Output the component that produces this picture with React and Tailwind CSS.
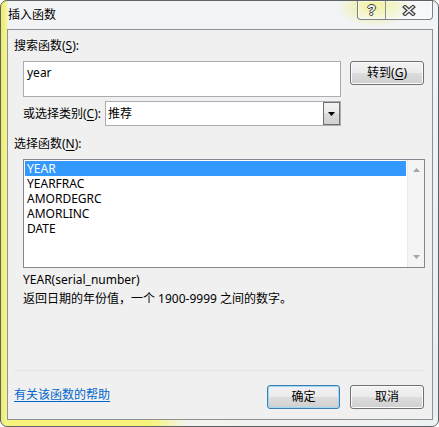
import React from 'react';

const FUNCS = ['YEAR', 'YEARFRAC', 'AMORDEGRC', 'AMORLINC', 'DATE'];

const btnFace =
  'bg-[linear-gradient(180deg,#f2f2f2_0%,#ebebeb_50%,#dddddd_50%,#cfcfcf_100%)]';

function WinButton({ children, primary, width }) {
  return (
    <button
      type="button"
      className={`h-[24px] shrink-0 rounded-[3px] border text-[12px] leading-4 text-black ${btnFace} ${width} ${
        primary
          ? 'border-[#3c7fb1] shadow-[inset_0_0_0_1px_#9cd9f6]'
          : 'border-[#707070] shadow-[inset_0_0_0_1px_#fbfbfb]'
      }`}
    >
      {children}
    </button>
  );
}

function Arrow({ up, color = '#000', w = 7, h = 4 }) {
  return (
    <svg width={w} height={h} viewBox={`0 0 ${w} ${h}`}>
      {up ? (
        <polygon points={`0,${h} ${w},${h} ${w / 2},0`} fill={color} />
      ) : (
        <polygon points={`0,0 ${w},0 ${w / 2},${h}`} fill={color} />
      )}
    </svg>
  );
}

function TitleControls() {
  return (
    <div className="flex h-[19px] rounded-b-[4px] border-x border-b border-[#7d8288] bg-[linear-gradient(180deg,rgba(255,255,255,0.15),rgba(255,255,255,0.45))] shadow-[inset_0_0_0_1px_rgba(255,255,255,0.5)]">
      <div className="flex w-[28px] items-center justify-center border-r border-[#8a8f95]">
        <span className="font-['Liberation_Sans',sans-serif] text-[14px] font-bold leading-4 text-[#f2f2f2] [text-shadow:1px_0_#3d3d3d,-1px_0_#3d3d3d,0_1px_#3d3d3d,0_-1px_#3d3d3d]">
          ?
        </span>
      </div>
      <div className="flex w-[46px] items-center justify-center">
        <svg width="14" height="11" viewBox="0 0 14 11">
          <path d="M3 2 L11 9 M11 2 L3 9" stroke="#3d3d3d" strokeWidth="4" strokeLinecap="square" />
          <path d="M3 2 L11 9 M11 2 L3 9" stroke="#eeeeee" strokeWidth="1.6" strokeLinecap="square" />
        </svg>
      </div>
    </div>
  );
}

export default function App() {
  return (
    <div className="w-[439px] h-[427px] overflow-hidden">
      <div className="flex h-[427px] w-[439px] flex-col rounded-[7px] border border-[#5d6266] font-['Noto_Sans','Noto_Sans_CJK_SC',sans-serif] text-[12px] text-black [background:radial-gradient(38px_20px_at_374px_6px,rgba(236,236,80,0.7),transparent),linear-gradient(90deg,#ecec6a_0,#f4f49c_6px,transparent_7px),linear-gradient(90deg,#f7f37a_0,#f7f37a_150px,#f3f3ee_185px,#eef1f3_100%)_bottom/100%_10px_no-repeat,linear-gradient(180deg,#f2f4f6,#e8edf0)]">
        {/* title bar */}
        <div className="flex h-[28px] items-start justify-between pl-[7px] pr-[5px]">
          <span className="mt-[6px] leading-4">插入函数</span>
          <TitleControls />
        </div>

        {/* client area */}
        <div className="ml-[6px] flex h-[391px] w-[426px] flex-col border border-[#8e9092] bg-[#f0f0f0]">
          <div className="ml-[6px] mt-[8px] h-4 leading-4">
            搜索函数(<span className="underline underline-offset-2">S</span>):
          </div>

          <div className="ml-[15px] mt-[7px] flex items-start gap-[9px]">
            <div className="h-[36px] w-[318px] border border-[#abadb3] bg-white pl-[3px] pt-[3px] leading-4">
              year
            </div>
            <WinButton width="w-[74px]">
              转到(<span className="underline underline-offset-2">G</span>)
            </WinButton>
          </div>

          <div className="ml-[15px] mt-[4px] flex h-[25px] items-center">
            <span className="w-[82px] leading-4">
              或选择类别(<span className="underline underline-offset-2">C</span>):
            </span>
            <div className="flex h-[25px] w-[236px] items-center justify-between border border-[#abadb3] bg-white">
              <span className="pl-[2px] leading-4">推荐</span>
              <div className={`flex h-[23px] w-[17px] items-center justify-center border border-[#707070] ${btnFace}`}>
                <Arrow />
              </div>
            </div>
          </div>

          <div className="ml-[6px] mt-[10px] h-4 leading-4">
            选择函数(<span className="underline underline-offset-2">N</span>):
          </div>

          <div className="ml-[15px] mt-[7px] flex h-[109px] w-[402px] border border-[#828790] bg-white">
            <div className="ml-[1px] mt-[1px] w-[381px]">
              {FUNCS.map((f, i) => (
                <div
                  key={f}
                  className={`h-[15px] pl-[2px] leading-[15px] ${i === 0 ? 'bg-[#3399ff] text-white' : ''}`}
                >
                  {f}
                </div>
              ))}
            </div>
            <div className="ml-auto flex w-[17px] flex-col justify-between border-l border-[#e9e9e9] bg-[#f4f4f4] py-[8px]">
              <div className="flex justify-center">
                <Arrow up color="#a5a5a5" />
              </div>
              <div className="flex justify-center">
                <Arrow color="#a5a5a5" />
              </div>
            </div>
          </div>

          <div className="ml-[15px] mt-[4px] h-4 leading-4">YEAR(serial_number)</div>
          <div className="ml-[15px] mt-[3px] h-4 leading-4">
            返回日期的年份值，一个 1900-9999 之间的数字。
          </div>

          <div className="ml-[6px] mt-[63px] h-px w-[411px] bg-[#dfe5e9]" />

          <div className="mt-[14px] flex items-start pl-[6px]">
            <a href="#" className="mt-[2px] leading-4 text-[#0066cc] underline underline-offset-2">
              有关该函数的帮助
            </a>
            <div className="ml-auto mr-[8px] flex gap-[10px]">
              <WinButton primary width="w-[73px]">确定</WinButton>
              <WinButton width="w-[74px]">取消</WinButton>
            </div>
          </div>
        </div>
      </div>
    </div>
  );
}
